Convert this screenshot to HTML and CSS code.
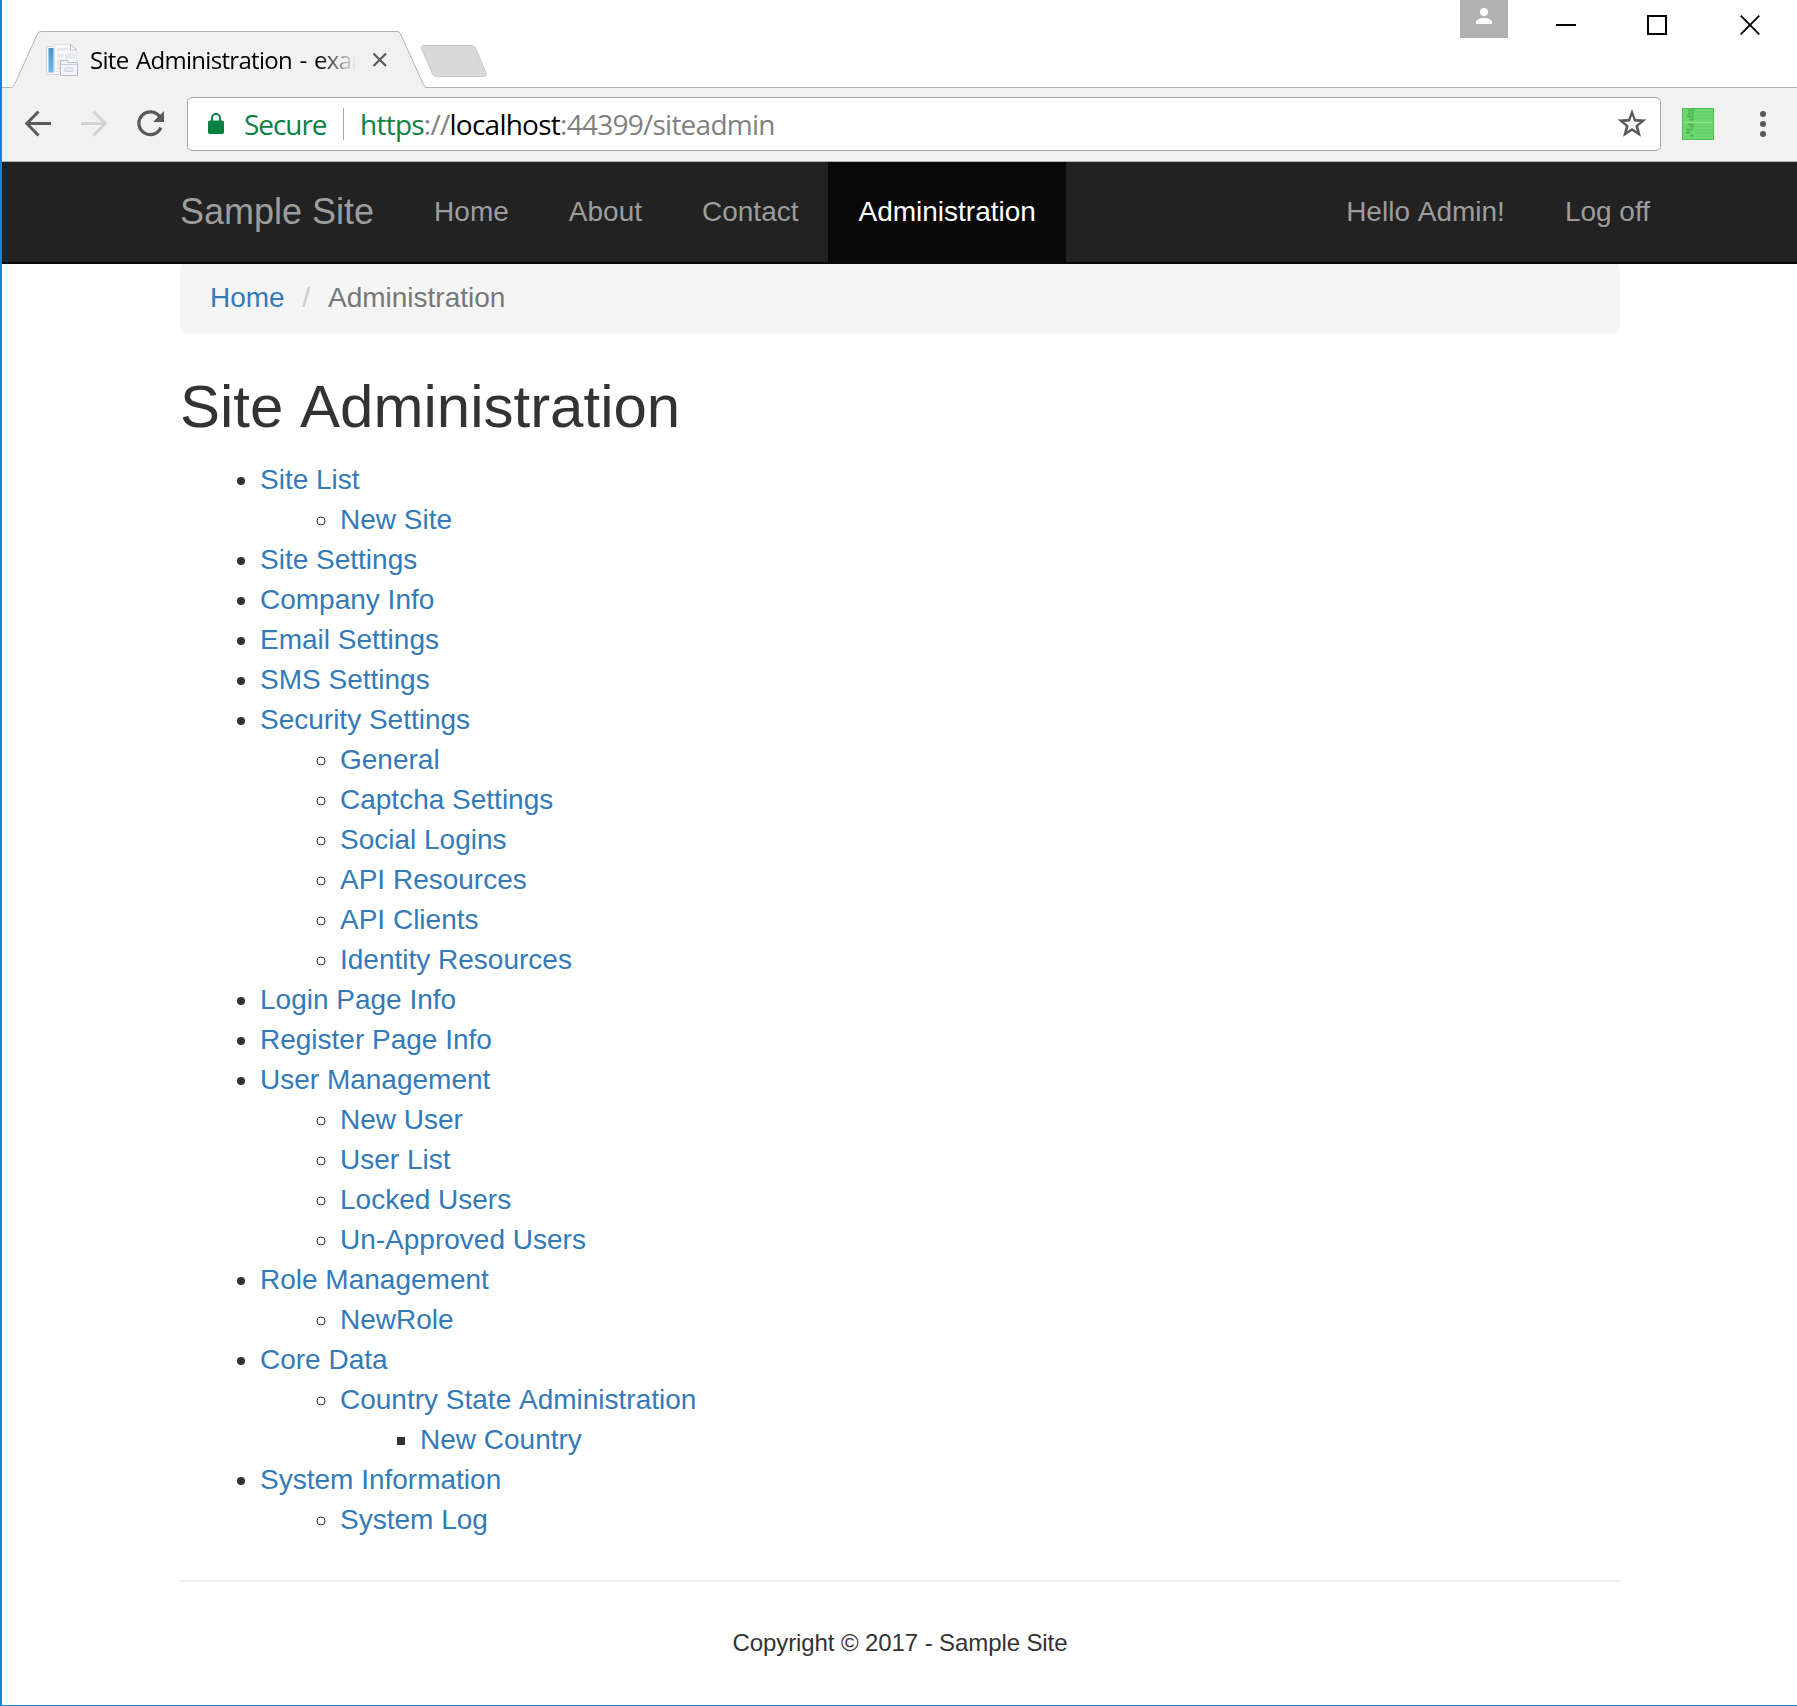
FILE: index.html
```html
<!DOCTYPE html>
<html lang="en">
<head>
<meta charset="utf-8">
<title>Site Administration</title>
<link rel="stylesheet" href="styles.css">
</head>
<body>
<div class="window">
  <div class="tab-strip">
    <div class="tab">
      <svg class="tab-shape" width="415" height="57" viewBox="12 31 415 57">
        <path d="M12 88 V87.500 Q14 87 15 84.500 L37.500 34 Q38.500 31.500 41 31.500 H397 Q399.500 31.500 400.500 34 L423 84.500 Q424 87.500 427 87.500 V88Z" fill="#f1f1f1"/>
        <path d="M10 87.500 Q13 87.500 14.500 84.500 L37.500 34 Q38.500 31.500 41 31.500 H397 Q399.500 31.500 400.500 34 L423.500 84.500 Q424.500 87.500 427 87.500" fill="none" stroke="#b3b3b3"/>
      </svg>
      <svg class="favicon" width="32" height="32" viewBox="0 0 32 32">
        <defs><linearGradient id="blue" x1="0" y1="0" x2="0" y2="1"><stop offset="0" stop-color="#4a94c4"/><stop offset="1" stop-color="#6fb7e8"/></linearGradient></defs>
        <path d="M.5 2.500H24V30.500H.5Z" fill="#f4f6f8" stroke="#d4d9df"/>
        <path d="M2.500 4H7.500V28.500H2.500Z" fill="url(#blue)"/>
        <path d="M8.500 .5H25L30.500 6V27.500H8.500Z" fill="#f8f9fb" stroke="#e0e2e7"/>
        <path d="M24.500 .5V6H30.500Z" fill="#fff" stroke="#a9adb5" stroke-width=".8"/>
        <path d="M11 4H22V7H11ZM11 10H18V13H11ZM19 9H29V15H19ZM11 15H16V26H11Z" fill="#e6e9ee"/>
        <path d="M14.500 16.500H22V18.500H31.500V31.500H14.500Z" fill="#f3f4f7" stroke="#b9bdc8"/>
        <path d="M15 20.500H31" stroke="#c9ccd6"/>
        <path d="M19 24H27V27.500H19Z" fill="#e8eaf0" stroke="#cfd3df"/>
      </svg>
      <div class="tab-title">Site Administration - exam</div>
      <svg class="tab-close" width="16" height="16" viewBox="0 0 16 16"><path d="M1.500 1.500L14 14M14 1.500L1.500 14" stroke="#5a5a5a" stroke-width="2.200"/></svg>
    </div>
    <svg class="new-tab" width="68" height="34" viewBox="420 44 68 34"><path d="M424 45.500H471Q474 45.500 475.500 48L486 73Q487.500 76.500 484 76.500H437Q434 76.500 432.500 74L421.500 48.500Q420.500 45.500 424 45.500Z" fill="#d8d8d8" stroke="#c9c9c9"/></svg>
    <div class="window-controls">
      <div class="profile"><svg width="16" height="16" viewBox="0 0 16 16"><circle cx="8" cy="4" r="4" fill="#fff"/><path d="M0 16V13.500Q1 10 8 10T16 13.500V16Z" fill="#fff"/></svg></div>
      <svg class="minimize" width="20" height="20" viewBox="0 0 20 20"><path d="M0 10H20" stroke="#000" stroke-width="2"/></svg>
      <svg class="maximize" width="20" height="20" viewBox="0 0 20 20"><path d="M1 1H19V19H1Z" fill="none" stroke="#000" stroke-width="2"/></svg>
      <svg class="close" width="20" height="20" viewBox="0 0 20 20"><path d="M.7 .7L19.300 19.300M19.300 .7L.7 19.300" stroke="#000" stroke-width="1.800"/></svg>
    </div>
  </div>

  <div class="toolbar">
    <svg class="back" width="28" height="28" viewBox="24 110 28 28"><path d="M51 123.500H27.500M38.500 111.500L26.800 123.500L38.500 135.500" fill="none" stroke="#5a5a5a" stroke-width="3"/></svg>
    <svg class="forward" width="28" height="28" viewBox="80 110 28 28"><path d="M81 123.500H104.500M93.500 111.500L105.200 123.500L93.500 135.500" fill="none" stroke="#d3d3d3" stroke-width="3"/></svg>
    <svg class="reload" width="28" height="28" viewBox="137 110 28 28"><path d="M159.500 116.500A11.400 11.400 0 1 0 160.800 127.700" fill="none" stroke="#5a5a5a" stroke-width="3.200"/><path d="M164 111V122H153Z" fill="#5a5a5a"/></svg>
    <div class="address">
      <svg class="lock" width="16" height="21" viewBox="0 0 16 21"><rect y="7.500" width="16" height="13.500" rx="1.700" fill="#0b8043"/><path d="M4 9V5A4 4 0 0 1 12 5V9" fill="none" stroke="#0b8043" stroke-width="2"/></svg>
      <span class="secure">Secure</span>
      <span class="divider"></span>
      <span class="url"><span class="scheme">https</span>://<span class="host">localhost</span>:44399/siteadmin</span>
      <svg class="star" width="30" height="29" viewBox="0 0 30 29"><path fill-rule="evenodd" d="M15 0L18.700 9.900L29.500 10.500L21.200 17.200L24 27.800L15 22L6 27.800L8.800 17.200L.5 10.500L11.300 9.900ZM15 6.500L12.900 12.400L7 12.900L11.700 16.500L10.200 22.300L15 19.100L19.800 22.300L18.300 16.500L23 12.900L17.100 12.400Z" fill="#5a5a5a"/></svg>
    </div>
    <svg class="extension" width="32" height="32" viewBox="0 0 32 32">
      <rect x=".5" y=".5" width="31" height="31" fill="#6fd66f" stroke="#4fbf50"/>
      <path d="M6 2.500H12M6 5.500H12M5 8.500H12M7 11.500H12M6 16.500H11M8 18.500H12M4 21.500H11M4 24.500H8M8 27.500H12" stroke="#4fb552" stroke-width="2"/>
      <path d="M13 4H31M13 7H31M13 10H31M13 18H31M13 22H31M13 25H31" stroke="#65cc66"/>
      <path d="M1 14.500H31" stroke="#89e48a"/>
    </svg>
    <svg class="menu" width="6" height="28" viewBox="0 0 6 28"><circle cx="3" cy="4" r="3" fill="#5a5a5a"/><circle cx="3" cy="14" r="3" fill="#5a5a5a"/><circle cx="3" cy="24" r="3" fill="#5a5a5a"/></svg>
  </div>

  <nav class="navbar">
    <div class="navbar-inner">
      <a class="brand">Sample Site</a>
      <a class="nav-link">Home</a>
      <a class="nav-link">About</a>
      <a class="nav-link">Contact</a>
      <a class="nav-link active">Administration</a>
      <a class="nav-link push">Hello Admin!</a>
      <a class="nav-link logoff">Log off</a>
    </div>
  </nav>

  <main class="container">
    <div class="breadcrumb"><a>Home</a><span class="separator">/</span><span>Administration</span></div>
    <h2>Site Administration</h2>
    <ul>
      <li><a>Site List</a>
        <ul><li><a>New Site</a></li></ul>
      </li>
      <li><a>Site Settings</a></li>
      <li><a>Company Info</a></li>
      <li><a>Email Settings</a></li>
      <li><a>SMS Settings</a></li>
      <li><a>Security Settings</a>
        <ul>
          <li><a>General</a></li>
          <li><a>Captcha Settings</a></li>
          <li><a>Social Logins</a></li>
          <li><a>API Resources</a></li>
          <li><a>API Clients</a></li>
          <li><a>Identity Resources</a></li>
        </ul>
      </li>
      <li><a>Login Page Info</a></li>
      <li><a>Register Page Info</a></li>
      <li><a>User Management</a>
        <ul>
          <li><a>New User</a></li>
          <li><a>User List</a></li>
          <li><a>Locked Users</a></li>
          <li><a>Un-Approved Users</a></li>
        </ul>
      </li>
      <li><a>Role Management</a>
        <ul><li><a>NewRole</a></li></ul>
      </li>
      <li><a>Core Data</a>
        <ul>
          <li><a>Country State Administration</a>
            <ul><li><a>New Country</a></li></ul>
          </li>
        </ul>
      </li>
      <li><a>System Information</a>
        <ul><li><a>System Log</a></li></ul>
      </li>
    </ul>
    <hr>
    <footer>Copyright © 2017 - Sample Site</footer>
  </main>
</div>
</body>
</html>
```
FILE: styles.css
```css
* { box-sizing: border-box; }
body {
  margin: 0;
  background: #fff;
  color: #333;
  font: 28px/40px "Liberation Sans", Arial, sans-serif;
  font-kerning: none;
}
svg { display: block; flex: none; }
.window {
  height: 1706px;
  overflow: hidden;
  border-left: 2px solid #1883d7;
  border-bottom: 1px solid #1883d7;
}

/* Browser tab strip */
.tab-strip {
  display: flex;
  align-items: flex-end;
  height: 88px;
  border-bottom: 1px solid #b3b3b3;
}
.tab {
  position: relative;
  display: flex;
  align-items: center;
  width: 415px;
  height: 57px;
  margin: 0 0 -1px 10px;
  padding-left: 34px;
}
.tab-shape { position: absolute; left: 0; top: 0; }
.favicon { position: relative; }
.tab-title {
  position: relative;
  width: 266px;
  margin-left: 12px;
  overflow: hidden;
  white-space: nowrap;
  color: #000;
  font: 24px/34px "Open Sans", "Noto Sans", sans-serif;
  letter-spacing: -0.7px;
  word-spacing: 2px;
  -webkit-mask-image: linear-gradient(to right, #000 228px, transparent 266px);
  mask-image: linear-gradient(to right, #000 228px, transparent 266px);
}
.tab-close { position: relative; margin-left: 16px; }
.new-tab { margin: 0 0 9px -7px; }
.window-controls {
  display: flex;
  align-items: flex-start;
  align-self: flex-start;
  margin-left: auto;
}
.profile {
  display: flex;
  justify-content: center;
  width: 48px;
  height: 38px;
  padding-top: 8px;
  background: #b1b1b1;
}
.minimize { margin: 15px 0 0 48px; }
.maximize { margin: 15px 0 0 71px; }
.close { margin: 15px 37px 0 73px; }

/* Browser toolbar */
.toolbar {
  display: flex;
  align-items: center;
  height: 74px;
  padding: 0 31px 2px 22px;
  background: #f1f1f1;
  border-bottom: 1px solid #b3b6b6;
}
.forward { margin-left: 28px; }
.reload { margin-left: 29px; }
.address {
  display: flex;
  align-items: center;
  flex: 1;
  height: 54px;
  margin: 0 21px 0 22px;
  padding: 0 13px 0 20px;
  background: #fff;
  border: 1px solid #a9a9a9;
  border-radius: 5px;
  color: #808080;
  font: 28px/40px "Open Sans", "Noto Sans", sans-serif;
}
.secure {
  width: 84px;
  margin-left: 20px;
  color: #0b8043;
  letter-spacing: -1.05px;
}
.divider { width: 1px; height: 32px; margin-left: 15px; background: #a9a9a9; }
.url { margin-left: 16px; letter-spacing: -0.75px; white-space: nowrap; }
.scheme { color: #0b8043; }
.host { color: #000; }
.star { margin-left: auto; }
.menu { margin-left: 46px; }

/* Site navigation */
.navbar {
  position: relative;
  z-index: 1;
  height: 102px;
  background: #222;
  border-bottom: 2px solid #080808;
}
.navbar-inner {
  display: flex;
  width: 1530px;
  margin-left: 148px;
  color: #9d9d9d;
}
.brand { padding: 30px; font-size: 36px; }
.nav-link { height: 100px; padding: 30px; }
.active { background: #080808; color: #fff; }
.push { margin-left: auto; }
.logoff { font-kerning: normal; }

/* Page content */
.container { width: 1440px; margin-left: 178px; }
.container a { color: #337ab7; }
.breadcrumb {
  display: flex;
  height: 72px;
  margin-top: -2px;
  padding: 16px 30px;
  background: #f5f5f5;
  border-radius: 8px;
  color: #777;
}
.separator { padding: 0 18px 0 17.500px; color: #ccc; }
h2 { margin: 40px 0 20px; font-size: 60px; font-weight: 500; line-height: 66px; }
ul { margin: 0; padding-left: 80px; }
hr { margin: 40px 0; border: 0; border-top: 2px solid #eee; }
footer { padding-top: 1px; font-size: 24px; letter-spacing: -0.1px; text-align: center; }
```
